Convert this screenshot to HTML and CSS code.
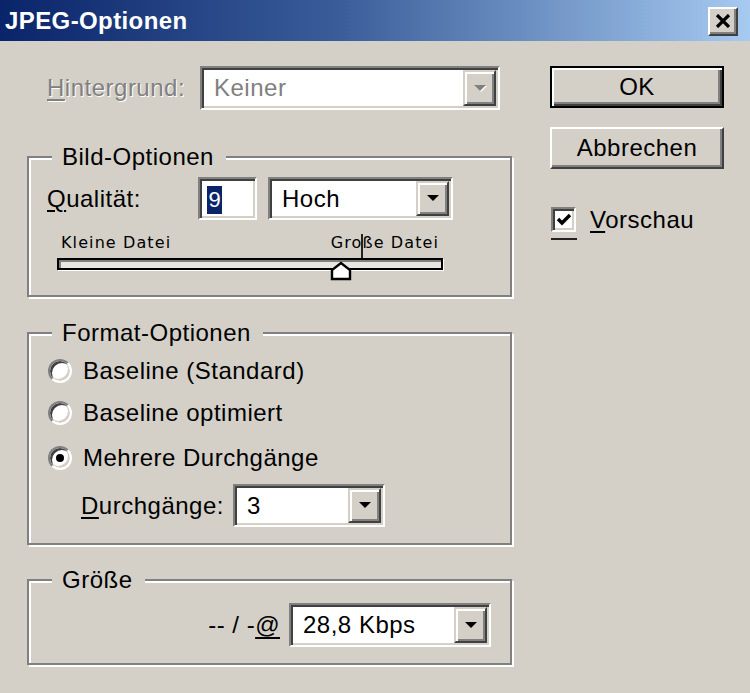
FILE: index.html
```html
<!DOCTYPE html>
<html lang="de">
<head>
<meta charset="utf-8">
<title>JPEG-Optionen</title>
<link rel="stylesheet" href="styles.css">
</head>
<body>
<div class="window">
  <div class="titlebar">
    <span class="title">JPEG-Optionen</span>
    <div class="close">
      <svg width="16" height="14" viewBox="0 0 16 14"><path d="M2 1 L14 13 M14 1 L2 13" stroke="#000" stroke-width="3.2" fill="none"/></svg>
    </div>
  </div>
  <div class="body">
    <div class="left">
      <div class="row bgrow">
        <span class="label disabled lbl-bg"><u>H</u>intergrund:</span>
        <div class="combo combo-bg disabled-combo">
          <span class="combo-text">Keiner</span>
          <span class="arrow"><svg width="12" height="7" viewBox="0 0 12 7"><polygon points="0,0 12,0 6,6" fill="#808080"/></svg></span>
        </div>
      </div>

      <fieldset class="group g1">
        <legend>Bild-Optionen</legend>
        <div class="row qrow">
          <span class="label lbl-q"><u>Q</u>ualität:</span>
          <div class="field qinput"><span class="sel">9</span></div>
          <div class="combo combo-q">
            <span class="combo-text">Hoch</span>
            <span class="arrow"><svg width="12" height="7" viewBox="0 0 12 7"><polygon points="0,0 12,0 6,6" fill="#000"/></svg></span>
          </div>
        </div>
        <div class="slider">
          <div class="slider-labels"><span>Kleine Datei</span><span>Große Datei</span></div>
          <div class="track">
            <span class="tick"></span>
            <svg class="thumb" width="22" height="20" viewBox="0 0 22 20"><polygon points="2,18 2,9 11,2 20,9 20,18" fill="#fff" stroke="#000" stroke-width="2.4" stroke-linejoin="miter"/></svg>
          </div>
        </div>
      </fieldset>

      <fieldset class="group g2">
        <legend>Format-Optionen</legend>
        <div class="radio-row r1"><span class="radio"></span><span class="rtext">Baseline (Standard)</span></div>
        <div class="radio-row r2"><span class="radio"></span><span class="rtext">Baseline optimiert</span></div>
        <div class="radio-row r3"><span class="radio checked"></span><span class="rtext">Mehrere Durchgänge</span></div>
        <div class="row drow">
          <span class="label lbl-d"><u>D</u>urchgänge:</span>
          <div class="combo combo-d">
            <span class="combo-text">3</span>
            <span class="arrow"><svg width="12" height="7" viewBox="0 0 12 7"><polygon points="0,0 12,0 6,6" fill="#000"/></svg></span>
          </div>
        </div>
      </fieldset>

      <fieldset class="group g3">
        <legend>Größe</legend>
        <div class="row srow">
          <span class="label lbl-s">-- / -<u>@</u></span>
          <div class="combo combo-s">
            <span class="combo-text">28,8 Kbps</span>
            <span class="arrow"><svg width="12" height="7" viewBox="0 0 12 7"><polygon points="0,0 12,0 6,6" fill="#000"/></svg></span>
          </div>
        </div>
      </fieldset>
    </div>

    <div class="right">
      <div class="btn default"><span class="btn-inner">OK</span></div>
      <div class="btn"><span class="btn-inner">Abbrechen</span></div>
      <div class="check-row">
        <div class="check-wrap">
          <span class="checkbox"><svg width="16" height="14" viewBox="0 0 16 14"><path d="M2 6 L6 10 L14 2" stroke="#000" stroke-width="3.4" fill="none"/></svg></span>
          <span class="check-line"></span>
        </div>
        <span class="ctext"><u>V</u>orschau</span>
      </div>
    </div>
  </div>
</div>
</body>
</html>
```

FILE: styles.css
```css
* { box-sizing: border-box; }
html, body { margin: 0; padding: 0; }
body {
  background: #d4d0c8;
  font-family: "Liberation Sans", Arial, sans-serif;
  font-size: 24px;
  letter-spacing: 0.5px;
  color: #000;
}
.window {
  width: 750px;
  height: 693px;
  background: #d4d0c8;
  overflow: hidden;
}
.titlebar {
  height: 41px;
  background: linear-gradient(to right, #0a246a 0%, #3a5d9a 45%, #a6caf0 100%);
  display: flex;
  align-items: center;
  justify-content: space-between;
  padding: 0 12px 0 5px;
}
.title {
  color: #fff;
  font-weight: bold;
  font-size: 24px;
  letter-spacing: 0.4px;
}
.close {
  width: 30px;
  height: 29px;
  background: #d4d0c8;
  border: 2px solid;
  border-color: #fff #404040 #404040 #fff;
  box-shadow: inset -2px -2px 0 #808080;
  display: flex;
  align-items: center;
  justify-content: center;
  margin-top: 1px;
}
.body {
  display: flex;
  padding-top: 25px;
}
.left {
  width: 512px;
  padding-left: 27px;
  display: flex;
  flex-direction: column;
}
.right {
  margin-left: 38px;
  width: 174px;
  display: flex;
  flex-direction: column;
}
.row { display: flex; align-items: center; }
.label { white-space: nowrap; }
.label u { text-decoration-thickness: 2px; text-underline-offset: 3px; }
.disabled { color: #808080; text-shadow: 1px 1px 0 #fff; }
.bgrow { padding-left: 20px; height: 44px; }
.lbl-bg { width: 153px; }

.combo {
  display: flex;
  align-items: stretch;
  height: 44px;
  background: #fff;
  border: 2px solid;
  border-color: #808080 #fff #fff #808080;
  box-shadow: inset 2px 2px 0 #404040, inset -2px -2px 0 #d4d0c8;
  padding: 2px;
}
.combo-text {
  flex: 1;
  display: flex;
  align-items: center;
  padding-left: 10px;
  white-space: nowrap;
}
.arrow {
  width: 33px;
  background: #d4d0c8;
  border: 2px solid;
  border-color: #d4d0c8 #404040 #404040 #d4d0c8;
  box-shadow: inset 2px 2px 0 #fff, inset -2px -2px 0 #808080;
  display: flex;
  align-items: center;
  justify-content: center;
}
.combo-bg { width: 300px; }
.disabled-combo .combo-text { color: #808080; }
.disabled-combo .arrow svg { filter: drop-shadow(1px 1px 0 #fff); }

.group {
  margin: 33px 0 0 0;
  padding: 0 18px;
  width: 485px;
  border: 2px solid #808080;
  box-shadow: inset 2px 2px 0 #fff, 2px 2px 0 #fff;
  min-width: 0;
}
.group legend {
  margin-left: 5px;
  padding: 0 12px 0 10px;
  line-height: 28px;
  background: #d4d0c8;
  font-size: 24px;
}
.g1 { padding-bottom: 25px; }
.qrow { margin-top: 6px; height: 43px; }
.lbl-q { width: 151px; }
.field {
  height: 43px;
  background: #fff;
  border: 2px solid;
  border-color: #808080 #fff #fff #808080;
  box-shadow: inset 2px 2px 0 #404040, inset -2px -2px 0 #d4d0c8;
}
.qinput {
  width: 59px;
  padding: 6px 0 0 7px;
}
.sel {
  display: inline-block;
  background: #0a246a;
  color: #fff;
  width: 15px;
  height: 28px;
  line-height: 28px;
  text-align: center;
  font-size: 22px;
  letter-spacing: 0;
}
.combo-q { width: 185px; height: 43px; margin-left: 11px; }

.slider { margin-left: 10px; width: 386px; margin-top: 13px; }
.slider-labels {
  display: flex;
  justify-content: space-between;
  padding: 0 4px 0 4px;
  font-family: "DejaVu Sans", sans-serif;
  font-size: 16px;
  letter-spacing: 1.1px;
  line-height: 20px;
}
.track {
  position: relative;
  margin-top: 5px;
  height: 12px;
  background: #e8e6e0;
  border: 2px solid #000;
  box-shadow: 1px 1px 0 #fff, inset 2px 2px 0 #808080;
}
.tick {
  position: absolute;
  left: 302px;
  top: -26px;
  width: 2px;
  height: 24px;
  background: #222;
}
.thumb {
  position: absolute;
  left: 271px;
  top: 1px;
}

.g2 { margin-top: 22px; padding-bottom: 16px; }
.radio-row {
  display: flex;
  align-items: center;
  height: 42px;
  padding-left: 1px;
}
.r1 { margin-top: 3px; }
.r3 { margin-top: 3px; }
.radio {
  width: 24px;
  height: 24px;
  border-radius: 50%;
  background: #fff;
  border: 2px solid;
  border-color: #808080 #fff #fff #808080;
  box-shadow: inset 2px 2px 0 #404040, inset -2px -2px 0 #d4d0c8;
  position: relative;
  flex: none;
}
.radio.checked::after {
  content: "";
  position: absolute;
  left: 6px;
  top: 6px;
  width: 8px;
  height: 8px;
  border-radius: 50%;
  background: #000;
}
.rtext { margin-left: 11px; }
.drow { margin-top: 5px; padding-left: 34px; height: 43px; }
.lbl-d { width: 152px; }
.combo-d { width: 152px; height: 43px; }

.g3 { margin-top: 21px; padding-bottom: 16px; }
.srow { margin-top: 9px; justify-content: flex-end; padding-right: 1px; height: 44px; }
.lbl-s { margin-right: 9px; }
.lbl-s u { text-underline-offset: 4px; }
.combo-s { width: 202px; }

.btn {
  height: 42px;
  background: #d4d0c8;
  border: 2px solid;
  border-color: #fff #404040 #404040 #fff;
  box-shadow: inset -2px -2px 0 #808080;
  display: flex;
  align-items: center;
  justify-content: center;
  margin-top: 19px;
}
.btn.default {
  margin-top: 0;
  border: 2px solid #000;
  box-shadow: inset 2px 2px 0 #fff, inset -2px -2px 0 #404040, inset -4px -4px 0 #808080;
}
.btn-inner { white-space: nowrap; }
.check-row {
  display: flex;
  align-items: flex-start;
  margin-top: 38px;
  padding-left: 1px;
}
.check-wrap { display: flex; flex-direction: column; }
.checkbox {
  width: 25px;
  height: 25px;
  background: #fff;
  border: 2px solid;
  border-color: #808080 #fff #fff #808080;
  box-shadow: inset 2px 2px 0 #404040, inset -2px -2px 0 #d4d0c8;
  display: flex;
  align-items: center;
  justify-content: center;
}
.check-line {
  margin-top: 6px;
  width: 26px;
  height: 2px;
  background: #222;
}
.ctext { margin-left: 13px; line-height: 25px; }
.ctext u { text-decoration-thickness: 2px; text-underline-offset: 3px; }
```
